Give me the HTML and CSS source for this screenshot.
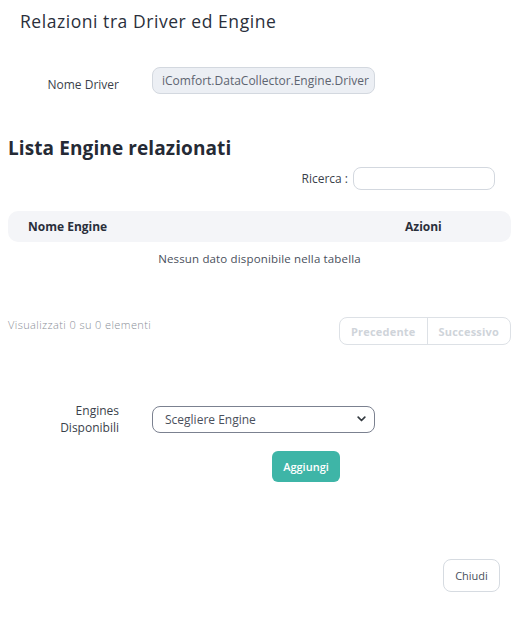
FILE: index.html
```html
<!DOCTYPE html>
<html lang="it">
<head>
<meta charset="utf-8">
<title>Relazioni tra Driver ed Engine</title>
<link rel="stylesheet" href="styles.css">
</head>
<body>
<div class="page">
  <h1 class="title">Relazioni tra Driver ed Engine</h1>

  <div class="form-row row-driver">
    <label class="form-label">Nome Driver</label>
    <div class="field readonly">iComfort.DataCollector.Engine.Driver</div>
  </div>

  <h2 class="subtitle">Lista Engine relazionati</h2>

  <div class="search-row">
    <label class="search-label">Ricerca :</label>
    <div class="search-input"></div>
  </div>

  <div class="table-head">
    <span class="th th-name">Nome Engine</span>
    <span class="th th-actions">Azioni</span>
  </div>
  <div class="empty">Nessun dato disponibile nella tabella</div>

  <div class="table-footer">
    <span class="info">Visualizzati 0 su 0 elementi</span>
    <div class="pager">
      <span class="pager-btn">Precedente</span>
      <span class="pager-btn">Successivo</span>
    </div>
  </div>

  <div class="form-row row-engines">
    <label class="form-label two-line">Engines<br>Disponibili</label>
    <div class="field select">
      <span>Scegliere Engine</span>
      <svg class="chev" width="9" height="6" viewBox="0 0 9 6"><path d="M1.2 1.2 L4.5 4.5 L7.8 1.2" fill="none" stroke="#343a40" stroke-width="1.7" stroke-linecap="round" stroke-linejoin="round"/></svg>
    </div>
  </div>

  <div class="add-row">
    <span class="btn-add">Aggiungi</span>
  </div>

  <div class="close-row">
    <span class="btn-close">Chiudi</span>
  </div>
</div>
</body>
</html>
```

FILE: styles.css
```css
* { box-sizing: border-box; }
html, body { margin: 0; padding: 0; background: #ffffff; }
body {
  font-family: "Open Sans", "Noto Sans", "Liberation Sans", sans-serif;
  color: #2e3440;
}
.page {
  width: 521px;
  padding: 0 10px 0 8px;
}
.title {
  margin: 0;
  padding: 9px 0 0 12px;
  font-size: 17.5px;
  line-height: 24px;
  font-weight: 500;
  color: #2a2f3b;
  letter-spacing: 0.55px;
}
.form-row {
  display: grid;
  grid-template-columns: 111px 223px;
  column-gap: 33px;
  align-items: center;
}
.row-driver { margin-top: 34px; }
.form-label {
  text-align: right;
  font-size: 12px;
  line-height: 17px;
  color: #3a3f4b;
}
.row-driver .form-label { padding-top: 7px; }
.field {
  height: 27px;
  border-radius: 8px;
  font-size: 12px;
  display: flex;
  align-items: center;
  padding: 0 9px;
}
.readonly {
  background: #eceff4;
  border: 1px solid #d3d8df;
  color: #5d6470;
}
.subtitle {
  margin: 0;
  margin-top: 42px;
  font-size: 19px;
  line-height: 24px;
  font-weight: 700;
  color: #252a35;
  letter-spacing: 0.1px;
}
.search-row {
  display: flex;
  justify-content: flex-end;
  align-items: center;
  gap: 5px;
  margin-top: 7px;
  padding-right: 16px;
}
.search-label {
  font-size: 12px;
  color: #3a3f4b;
}
.search-input {
  width: 142px;
  height: 23px;
  border: 1px solid #d3d8df;
  border-radius: 8px;
}
.table-head {
  margin-top: 21px;
  height: 31px;
  background: #f4f5f8;
  border-radius: 10px;
  display: flex;
  align-items: center;
  padding: 0 0 0 20px;
}
.th {
  font-size: 12px;
  font-weight: 700;
  color: #2a2f3b;
}
.th-name { flex: 1; }
.th-actions { width: 106px; }
.empty {
  text-align: center;
  font-size: 11.5px;
  line-height: 16px;
  margin-top: 9px;
  color: #4a505c;
  letter-spacing: 0.15px;
}
.table-footer {
  margin-top: 50px;
  display: flex;
  justify-content: space-between;
  align-items: flex-start;
}
.info {
  font-size: 11px;
  font-weight: 300;
  color: #8a8f98;
  line-height: 16px;
  letter-spacing: 0.4px;
}
.pager {
  display: flex;
  height: 28px;
  border: 1px solid #dde1e6;
  border-radius: 8px;
  overflow: hidden;
}
.pager-btn {
  display: flex;
  align-items: center;
  padding: 0 11px;
  font-size: 11px;
  font-weight: 700;
  color: #cfd4da;
  letter-spacing: 0.2px;
}
.pager-btn + .pager-btn { border-left: 1px solid #dde1e6; }
.row-engines { margin-top: 57px; }
.two-line { line-height: 17px; }
.select {
  border: 1px solid #7b8190;
  color: #4a505c;
  justify-content: space-between;
  padding: 0 8px 0 12px;
}
.chev { display: block; }
.add-row {
  display: flex;
  padding-left: 264px;
  margin-top: 15px;
}
.btn-add {
  width: 68px;
  height: 31px;
  background: #3eb5a7;
  color: #ffffff;
  border-radius: 6px;
  font-size: 11px;
  font-weight: 600;
  display: flex;
  align-items: center;
  justify-content: center;
}
.close-row {
  display: flex;
  justify-content: flex-end;
  padding-right: 11px;
  margin-top: 77px;
}
.btn-close {
  width: 57px;
  height: 33px;
  border: 1px solid #d6dbe1;
  border-radius: 8px;
  font-size: 11px;
  color: #4a505c;
  display: flex;
  align-items: center;
  justify-content: center;
}
```
